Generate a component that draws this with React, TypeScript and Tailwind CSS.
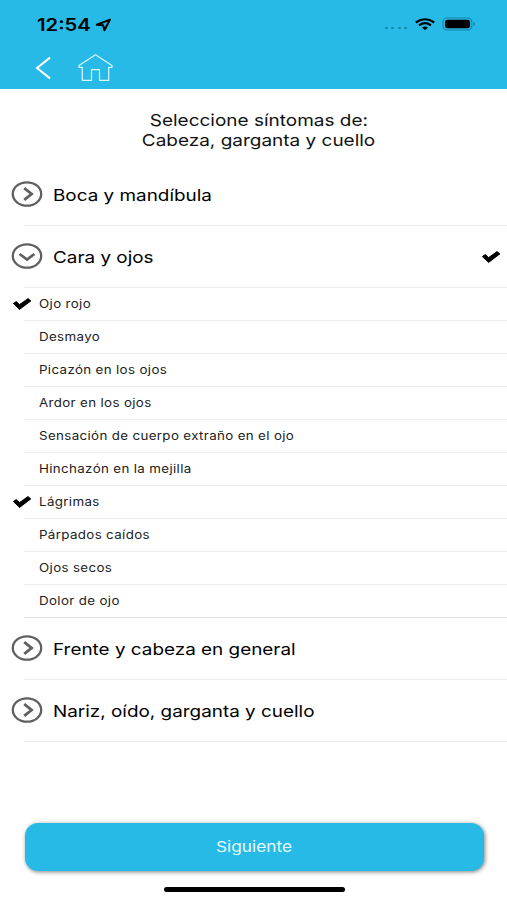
import clsx from "clsx";

const symptoms = [
  { name: "Ojo rojo", checked: true },
  { name: "Desmayo", checked: false },
  { name: "Picazón en los ojos", checked: false },
  { name: "Ardor en los ojos", checked: false },
  { name: "Sensación de cuerpo extraño en el ojo", checked: false },
  { name: "Hinchazón en la mejilla", checked: false },
  { name: "Lágrimas", checked: true },
  { name: "Párpados caídos", checked: false },
  { name: "Ojos secos", checked: false },
  { name: "Dolor de ojo", checked: false },
];

const sections = [
  { title: "Boca y mandíbula", open: false },
  { title: "Cara y ojos", open: true },
  { title: "Frente y cabeza en general", open: false },
  { title: "Nariz, oído, garganta y cuello", open: false },
];

function CheckMark() {
  return (
    <svg className="w-5 h-3.5 shrink-0" viewBox="0 0 20 14" fill="#000" stroke="#000" strokeWidth="1" strokeLinejoin="round">
      <path d="M1.4 6.6 4.2 4.6 7.6 7.6 16 1.6 18.8 3.9 7.6 12.4Z" />
    </svg>
  );
}

function CircleChevron({ open }: { open: boolean }) {
  return (
    <svg className="w-8 h-7 shrink-0" viewBox="0 0 32 28" fill="none" stroke="#606060">
      <ellipse cx="16" cy="14" rx="14.2" ry="11.7" strokeWidth="2.3" />
      <path d={open ? "M8.6 12 16 17.6 23.4 12" : "M13.2 8.2 20.6 14 13.2 19.8"} strokeWidth="2.8" />
    </svg>
  );
}

function StatusBar() {
  return (
    <div className="flex h-12 items-center pl-[37px] pr-[31px]">
      <span className="mt-[2px] w-[53px] origin-left scale-x-[1.19] whitespace-nowrap text-[17px] font-semibold leading-none">
        12:54
      </span>
      <svg className="ml-[5px] mt-px w-[17px] h-[14px]" viewBox="0 0 17 14" fill="none" stroke="#000" strokeWidth="2" strokeLinejoin="round">
        <path d="M1.8 6.8 15 1.6 9.4 12.2 8.2 7.2Z" />
      </svg>
      <div className="ml-auto flex items-center">
        <div className="mt-2 flex gap-[3.5px]">
          {[0, 1, 2, 3].map((dot) => (
            <span key={dot} className="w-[3px] h-[2.5px] rounded-full bg-[#1b86a8]" />
          ))}
        </div>
        <svg className="ml-2 w-5 h-[13px]" viewBox="0 0 20 13" fill="none" stroke="#000" strokeWidth="2.2">
          <path d="M.8 4.5Q10-2 19.2 4.5" />
          <path d="M4.1 7.3Q10 3 15.9 7.3" />
          <path d="M7 9.4Q10 7.5 13 9.4L10 12.3Z" fill="#000" stroke="none" />
        </svg>
        <svg className="ml-[7px] w-[34px] h-[14px]" viewBox="0 0 34 14">
          <rect x="1" y="1" width="28.8" height="12" rx="4" fill="none" stroke="#1782a3" strokeWidth="1.1" />
          <rect x="3" y="2.8" width="25" height="8.5" rx="2.2" fill="#000" />
          <path d="M31.5 5q3 2 0 4Z" fill="#1782a3" />
        </svg>
      </div>
    </div>
  );
}

function SymptomList() {
  return (
    <ul>
      {symptoms.map((symptom, index) => (
        <li key={symptom.name} className="flex h-[33px] pl-3">
          <div className="relative z-10 flex w-3 items-center pb-px">{symptom.checked && <CheckMark />}</div>
          <div
            className={clsx(
              "flex flex-1 items-center border-b pl-[15px] pt-[2px]",
              index === symptoms.length - 1 ? "border-[#dcdcdc]" : "border-[#ececec]",
            )}
          >
            <span className="origin-left scale-x-[1.16] whitespace-nowrap text-[11.5px] tracking-[0.3px] text-[#222]">
              {symptom.name}
            </span>
          </div>
        </li>
      ))}
    </ul>
  );
}

export default function App() {
  return (
    <div className="flex h-[900px] w-[507px] flex-col overflow-hidden bg-white font-['Inter','Liberation_Sans',sans-serif] text-black">
      {/* Header */}
      <header className="h-[89px] bg-[#27bae6]">
        <StatusBar />
        <div className="flex items-center pl-[35px]">
          <svg className="w-4 h-10" viewBox="0 0 16 40" fill="none" stroke="#fff" strokeWidth="2">
            <path d="M15 9.6 2 20 15 30.4" />
          </svg>
          <svg className="ml-[27px] w-9 h-10" viewBox="0 0 36 40" fill="none" stroke="#d9f7ff" strokeWidth="1.2" strokeLinejoin="round">
            <path d="M17.5 6.8 1 17.4V19.4H4.3V32.4H13.5V21.7H21.5V32.4H30.7V19.4H34V17.4Z" />
          </svg>
        </div>
      </header>

      {/* Title */}
      <div className="flex h-[75px] flex-col items-center pl-[11px] pt-[22px] text-[16.5px] leading-[19.5px] text-[#111]">
        <h1 className="scale-x-[1.15] whitespace-nowrap">Seleccione síntomas de:</h1>
        <h1 className="scale-x-[1.15] whitespace-nowrap">Cabeza, garganta y cuello</h1>
      </div>

      {/* Sections */}
      <main>
        {sections.map((section) => (
          <section key={section.title}>
            <div className="flex h-[62px] pl-[11px]">
              <div className="flex w-[13px] items-center pb-[2px]">
                <CircleChevron open={section.open} />
              </div>
              <div className="flex flex-1 items-center justify-between border-b border-[#ececec] pl-[29px] pr-[6px]">
                <span className="mt-px origin-left scale-x-[1.145] whitespace-nowrap text-[16.5px]">{section.title}</span>
                {section.open && <CheckMark />}
              </div>
            </div>
            {section.open && <SymptomList />}
          </section>
        ))}
      </main>

      {/* Footer */}
      <footer className="mt-auto flex flex-col items-center pb-[8px] pl-px">
        <button className="h-[48px] w-[459px] rounded-[13px] bg-[#27bae6] text-[15px] text-[#e4faff] shadow-[1px_1px_4px_rgba(0,0,0,0.5)]">
          <span className="inline-block scale-x-[1.15]">Siguiente</span>
        </button>
        <div className="mt-4 h-[5px] w-[181px] rounded-full bg-black" />
      </footer>
    </div>
  );
}
